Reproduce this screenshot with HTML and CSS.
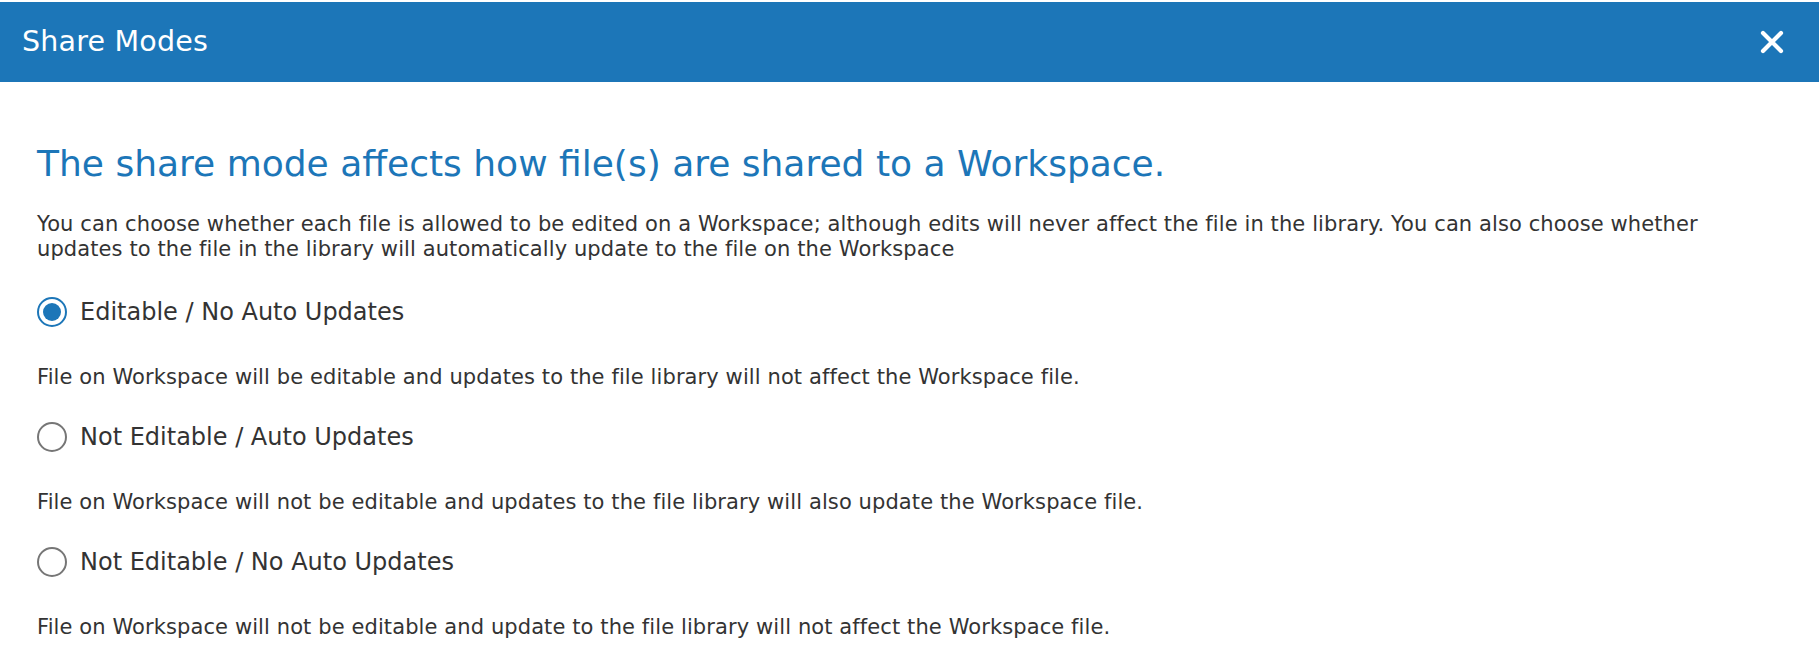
FILE: index.html
```html
<!DOCTYPE html>
<html lang="en">
<head>
<meta charset="utf-8">
<title>Share Modes</title>
<link rel="stylesheet" href="styles.css">
</head>
<body>
<div class="modal">
  <header class="modal-header">
    <h1 class="modal-title">Share Modes</h1>
    <button class="close-btn" aria-label="Close">
      <svg width="24" height="24" viewBox="0 0 24 24"><path d="M3 3 L21 21 M21 3 L3 21" stroke="#fff" stroke-width="4.2" stroke-linecap="round" fill="none"/></svg>
    </button>
  </header>
  <main class="modal-body">
    <h2 class="lead">The share mode affects how file(s) are shared to a Workspace.</h2>
    <p class="intro">You can choose whether each file is allowed to be edited on a Workspace; although edits will never affect the file in the library. You can also choose whether updates to the file in the library will automatically update to the file on the Workspace</p>

    <label class="option">
      <span class="radio checked"><span class="dot"></span></span>
      <span class="option-label">Editable / No Auto Updates</span>
    </label>
    <p class="desc">File on Workspace will be editable and updates to the file library will not affect the Workspace file.</p>

    <label class="option">
      <span class="radio"></span>
      <span class="option-label">Not Editable / Auto Updates</span>
    </label>
    <p class="desc">File on Workspace will not be editable and updates to the file library will also update the Workspace file.</p>

    <label class="option">
      <span class="radio"></span>
      <span class="option-label">Not Editable / No Auto Updates</span>
    </label>
    <p class="desc">File on Workspace will not be editable and update to the file library will not affect the Workspace file.</p>
  </main>
</div>
</body>
</html>
```

FILE: styles.css
```css
html, body {
  margin: 0;
  padding: 0;
  background: #ffffff;
}

body {
  font-family: "DejaVu Sans", "Open Sans", sans-serif;
  color: #333333;
}

.modal {
  padding-top: 2px;
}

.modal-header {
  height: 80px;
  background: #1c76b8;
  display: flex;
  align-items: center;
  justify-content: space-between;
  padding: 0 35px 0 22px;
}

.modal-title {
  margin: 0;
  font-size: 28.5px;
  font-weight: 400;
  color: #ffffff;
  line-height: 1;
  letter-spacing: 0.2px;
}

.close-btn {
  background: none;
  border: 0;
  padding: 0;
  width: 24px;
  height: 24px;
  display: flex;
  cursor: pointer;
}

.modal-body {
  padding: 62px 80px 0 37px;
}

.lead {
  margin: 0;
  font-size: 36px;
  line-height: 40px;
  font-weight: 400;
  color: #1c76b8;
}

.intro {
  margin: 28px 0 0;
  font-size: 21px;
  line-height: 25px;
  letter-spacing: 0.1px;
}

.option {
  display: flex;
  align-items: center;
  gap: 13px;
  height: 30px;
  margin-top: 35px;
}

.radio {
  box-sizing: border-box;
  width: 30px;
  height: 30px;
  border: 2px solid #767676;
  border-radius: 50%;
  display: flex;
  align-items: center;
  justify-content: center;
  flex: none;
}

.radio.checked {
  border-color: #1c76b8;
}

.dot {
  width: 18px;
  height: 18px;
  border-radius: 50%;
  background: #1c76b8;
}

.option-label {
  font-size: 24px;
  color: #333333;
}

.desc {
  margin: 38px 0 0;
  font-size: 21px;
  line-height: 25px;
  letter-spacing: 0.1px;
}

.option + .desc + .option {
  margin-top: 32px;
}
```
